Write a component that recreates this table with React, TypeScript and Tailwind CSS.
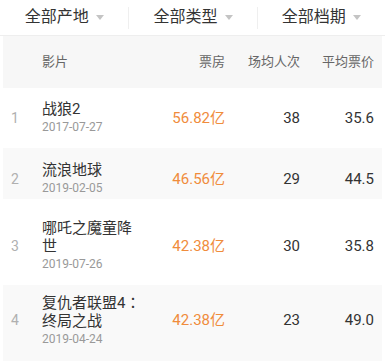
const filters = ['全部产地', '全部类型', '全部档期']

const movies = [
  { rank: 1, title: '战狼2', date: '2017-07-27', box: '56.82亿', avg: '38', price: '35.6', h: 'h-[60px]', pad: '', bg: 'bg-white' },
  { rank: 2, title: '流浪地球', date: '2019-02-05', box: '46.56亿', avg: '29', price: '44.5', h: 'h-[51px]', pad: 'pt-[11px]', bg: 'bg-[#f9f9f9]' },
  { rank: 3, title: '哪吒之魔童降世', date: '2019-07-26', box: '42.38亿', avg: '30', price: '35.8', h: 'h-[86px]', pad: 'pt-[8px]', bg: 'bg-white' },
  { rank: 4, title: '复仇者联盟4：终局之战', date: '2019-04-24', box: '42.38亿', avg: '23', price: '49.0', h: 'h-[76px]', pad: 'pb-[6px]', bg: 'bg-[#f9f9f9]' },
]

const font = 'font-[Roboto,"Noto_Sans_CJK_SC",sans-serif]'

function Caret() {
  return (
    <svg width="8" height="5" viewBox="0 0 8 5" className="ml-[7px] mt-[1px]">
      <path d="M0 0 H8 L4 5 Z" fill="#c4c4c4" />
    </svg>
  )
}

// full-width colon sits centred in the reference, like the TC glyph
function Title({ text }: { text: string }) {
  const parts = text.split('：')
  if (parts.length < 2) return <>{text}</>
  return (
    <>
      {parts[0]}
      <span className='font-["Noto_Sans_CJK_TC",sans-serif]'>：</span>
      {parts[1]}
    </>
  )
}

export default function App() {
  return (
    <div className={`w-[385px] h-[362px] bg-white overflow-hidden ${font}`}>
      {/* filter bar */}
      <div className="flex h-[36px] border-b border-[#eeeeee]">
        {filters.map((f, i) => (
          <div key={f} className="flex flex-1 items-center">
            {i > 0 && <div className="h-[22px] w-px bg-[#efefef]" />}
            <div className="flex flex-1 items-center justify-center pb-[2px]">
              <span className="text-[16px] leading-none text-[#333]">{f}</span>
              <Caret />
            </div>
          </div>
        ))}
      </div>

      <div className="mx-[3px]">
        {/* header */}
        <div className="flex h-[52px] items-center bg-[#f7f7f7] pr-[8px] text-[13px] text-[#666]">
          <div className="w-[39px]" />
          <div className="flex-1">影片</div>
          <div className="w-[75px] text-right">票房</div>
          <div className="w-[75px] text-right">场均人次</div>
          <div className="w-[74px] text-right">平均票价</div>
        </div>

        {movies.map((m) => (
          <div key={m.rank} className={`flex items-center pr-[8px] ${m.h} ${m.pad} ${m.bg}`}>
            <div className="w-[39px] pl-[8px] text-[14px] text-[#b0b0b0]">{m.rank}</div>
            <div className="flex-1">
              <div className="w-[100px] text-[15px] leading-[18px] text-[#333]">
                <Title text={m.title} />
              </div>
              <div className="text-[12px] leading-[18px] text-[#999]">{m.date}</div>
            </div>
            <div className="w-[75px] text-right text-[15px] text-[#f08c3c]">{m.box}</div>
            <div className="w-[75px] text-right text-[15px] text-[#333]">{m.avg}</div>
            <div className="w-[74px] text-right text-[15px] text-[#333]">{m.price}</div>
          </div>
        ))}
      </div>
    </div>
  )
}
